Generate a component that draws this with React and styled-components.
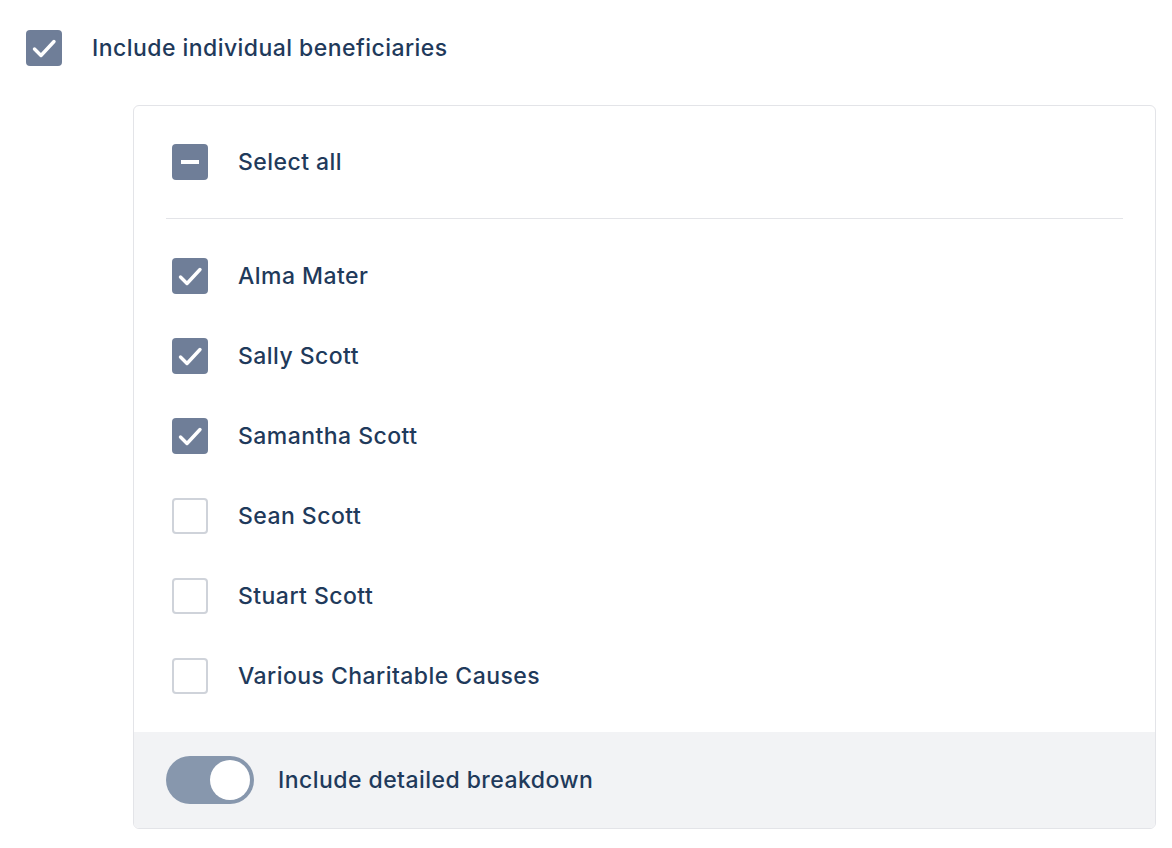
import { useState } from "react";
import styled, { createGlobalStyle } from "styled-components";

const GlobalStyle = createGlobalStyle`
  body {
    margin: 0;
    background: #ffffff;
    font-family: Inter, "Noto Sans", sans-serif;
  }
`;

const beneficiaries = [
  { name: "Alma Mater", checked: true },
  { name: "Sally Scott", checked: true },
  { name: "Samantha Scott", checked: true },
  { name: "Sean Scott", checked: false },
  { name: "Stuart Scott", checked: false },
  { name: "Various Charitable Causes", checked: false },
];

function Check({ state }) {
  return (
    <Box $on={state !== "off"}>
      {state === "on" && (
        <svg width="36" height="36" viewBox="0 0 36 36">
          <path
            d="M8.5 19l6.5 6.5L28 11.5"
            fill="none"
            stroke="#fff"
            strokeWidth="3.4"
            strokeLinecap="round"
            strokeLinejoin="round"
          />
        </svg>
      )}
      {state === "mixed" && <Dash />}
    </Box>
  );
}

export default function App() {
  const [items, setItems] = useState(beneficiaries);
  const [detailed, setDetailed] = useState(true);

  const toggle = (i) =>
    setItems(items.map((it, j) => (j === i ? { ...it, checked: !it.checked } : it)));

  return (
    <Page>
      <GlobalStyle />
      <TopRow>
        <Check state="on" />
        <Label>Include individual beneficiaries</Label>
      </TopRow>

      <Card>
        <List>
          <Row>
            <Check state="mixed" />
            <Label>Select all</Label>
          </Row>
          <Divider />
          {items.map((it, i) => (
            <Row key={it.name} onClick={() => toggle(i)}>
              <Check state={it.checked ? "on" : "off"} />
              <Label>{it.name}</Label>
            </Row>
          ))}
        </List>
        <Footer>
          <Switch $on={detailed} onClick={() => setDetailed(!detailed)}>
            <Knob $on={detailed} />
          </Switch>
          <Label>Include detailed breakdown</Label>
        </Footer>
      </Card>
    </Page>
  );
}

const Page = styled.div`
  padding: 30px 16px 18px 26px;
`;

const TopRow = styled.div`
  display: flex;
  align-items: center;
  gap: 30px;
  height: 36px;
`;

const Label = styled.span`
  font-family: Inter, "Noto Sans", sans-serif;
  font-size: 23px;
  font-weight: 500;
  color: #1f3a5b;
  letter-spacing: 0.45px;
`;

const Box = styled.div`
  width: 36px;
  height: 36px;
  box-sizing: border-box;
  border-radius: 4px;
  flex-shrink: 0;
  display: flex;
  align-items: center;
  justify-content: center;
  background: ${(p) => (p.$on ? "#6f7e98" : "#ffffff")};
  border: ${(p) => (p.$on ? "none" : "2px solid #cfd3da")};
`;

const Dash = styled.div`
  width: 18px;
  height: 4px;
  background: #fff;
`;

const Card = styled.div`
  margin: 39px 0 0 107px;
  border: 1px solid #e3e4e8;
  border-radius: 6px;
  overflow: hidden;
`;

const List = styled.div`
  padding: 16px 32px;
`;

const Row = styled.div`
  display: flex;
  align-items: center;
  gap: 30px;
  padding: 22px 6px;
  cursor: pointer;
`;

const Divider = styled.div`
  height: 1px;
  background: #e3e4e8;
  margin: 16px 0 17px;
`;

const Footer = styled.div`
  display: flex;
  align-items: center;
  gap: 24px;
  padding: 24px 32px;
  background: #f2f3f5;
`;

const Switch = styled.div`
  position: relative;
  width: 88px;
  height: 48px;
  border-radius: 24px;
  background: ${(p) => (p.$on ? "#8797ad" : "#d3d6dc")};
  cursor: pointer;
  flex-shrink: 0;
`;

const Knob = styled.div`
  position: absolute;
  top: 4px;
  left: ${(p) => (p.$on ? "44px" : "4px")};
  width: 40px;
  height: 40px;
  border-radius: 50%;
  background: #ffffff;
`;
